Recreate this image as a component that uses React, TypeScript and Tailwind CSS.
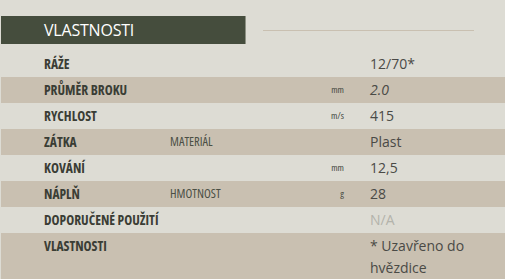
import React from "react";

type Row = { label: string; sub?: string; unit?: string; value: string; italic?: boolean; muted?: boolean; bg: "light" | "beige" };

const rows: Row[] = [
  { label: "RÁŽE", value: "12/70*", bg: "light" },
  { label: "PRŮMĚR BROKU", unit: "mm", value: "2.0", italic: true, bg: "beige" },
  { label: "RYCHLOST", unit: "m/s", value: "415", bg: "light" },
  { label: "ZÁTKA", sub: "MATERIÁL", value: "Plast", bg: "beige" },
  { label: "KOVÁNÍ", unit: "mm", value: "12,5", bg: "light" },
  { label: "NÁPLŇ", sub: "HMOTNOST", unit: "g", value: "28", bg: "beige" },
  { label: "DOPORUČENÉ POUŽITÍ", value: "N/A", muted: true, bg: "light" },
  { label: "VLASTNOSTI", value: "* Uzavřeno do hvězdice", bg: "beige" },
];

export default function App() {
  return (
    <div className="w-[505px] h-[279px] overflow-hidden bg-[#dddcd4] font-['Open_Sans',sans-serif]">
      <div className="ml-px pt-[16px]">
        <div className="flex items-center">
          <div className="w-[245px] h-[28px] bg-[#454d3d] border-r border-[#8d9183] pl-[43px] flex items-center">
            <span className="text-white text-[16px] leading-none tracking-[-0.2px]">VLASTNOSTI</span>
          </div>
          <div className="ml-[17px] w-[211px] h-px bg-[#c9c0b1]" />
        </div>
        <div className="mt-[7px] flex flex-col">
          {rows.map((r, i) => (
            <div
              key={i}
              className={`flex items-start min-h-[26px] ${r.bg === "beige" ? "bg-[#c9c0b1]" : "bg-[#dddcd4]"} ${i === rows.length - 1 ? "min-h-[50px]" : ""}`}
            >
              <div className="pl-[43px] w-[169px] shrink-0 leading-[26px] text-[13.5px] font-bold font-stretch-condensed text-[#3a3d35]">
                {r.label}
              </div>
              <div className="w-[120px] shrink-0 leading-[26px] text-[12.5px] font-stretch-condensed text-[#4b4f45]">
                {r.sub ?? ""}
              </div>
              <div className="w-[54px] shrink-0 text-right leading-[26px] text-[9.5px] font-stretch-condensed text-[#44483f]">
                {r.unit ?? ""}
              </div>
              <div
                className={`pl-[26px] w-[135px] shrink-0 leading-[22px] pt-[2px] text-[14px] ${r.italic ? "italic" : ""} ${r.muted ? "text-[#b3b3ab]" : "text-[#4a4a46]"}`}
              >
                {r.value}
              </div>
            </div>
          ))}
        </div>
      </div>
    </div>
  );
}
